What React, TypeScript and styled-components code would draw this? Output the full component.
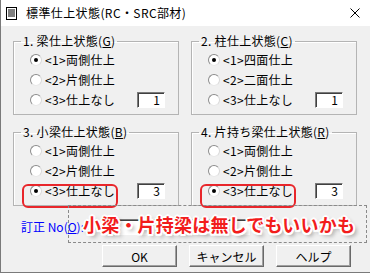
import React from 'react';
import styled, { createGlobalStyle } from 'styled-components';

const GlobalStyle = createGlobalStyle`
  body {
    margin: 0;
    background: #ffffff;
    font-family: "Noto Sans CJK JP", "Noto Sans", sans-serif;
  }
`;

const Window = styled.div`
  position: relative;
  width: 370px;
  height: 273px;
  box-sizing: border-box;
  border-left: 1px solid #7a7a7a;
  border-bottom: 1px solid #7a7a7a;
  background: #f0f0f0;
  font-size: 12px;
  color: #000;
`;

const TitleBar = styled.div`
  height: 26px;
  background: #ffffff;
  display: flex;
  align-items: center;
  padding: 0 10px 0 5px;
`;

const TitleText = styled.div`
  margin-left: 9px;
  font-size: 12px;
  line-height: 16px;
  letter-spacing: 0.4px;
  flex: 1;
`;

const Body = styled.div`
  padding: 7px 0 0 12px;
`;

const Groups = styled.div`
  display: grid;
  grid-template-columns: 166px 166px;
  column-gap: 12px;
  row-gap: 9px;
`;

const Group = styled.fieldset`
  margin: 0;
  min-width: 0;
  padding: 1px 13px 4px 16px;
  border: 1px solid #b4b4b4;
  box-shadow: inset 1px 1px 0 #ffffff;
`;

const Legend = styled.legend`
  margin-left: -9px;
  padding: 0 2px;
  font-size: 12px;
  line-height: 16px;
  height: 16px;
  letter-spacing: 0.3px;
`;

const Row = styled.div`
  position: relative;
  display: flex;
  align-items: center;
  height: 20px;
`;

const Radio = styled.span<{ checked?: boolean }>`
  position: relative;
  width: 12px;
  height: 12px;
  box-sizing: border-box;
  border-radius: 50%;
  border: 1px solid;
  border-color: #8c8c8c #d8d8d8 #e8e8e8 #8c8c8c;
  background: #ffffff;
  margin-right: 3px;
  flex: none;

  &::after {
    content: '';
    display: ${p => (p.checked ? 'block' : 'none')};
    position: absolute;
    left: 3px;
    top: 3px;
    width: 4px;
    height: 4px;
    border-radius: 50%;
    background: #000;
  }
`;

const RadioLabel = styled.span`
  line-height: 16px;
  white-space: nowrap;
  letter-spacing: 0.3px;
`;

const NumBox = styled.div<{ width?: number }>`
  margin-left: auto;
  width: ${p => p.width ?? 28}px;
  height: 16px;
  box-sizing: border-box;
  border: 1px solid;
  border-color: #7a7a7a #ffffff #ffffff #7a7a7a;
  box-shadow: inset 1px 1px 0 #404040;
  background: #ffffff;
  text-align: right;
  padding-right: 4px;
  line-height: 14px;
  font-size: 12px;
`;

const Highlight = styled.div`
  position: absolute;
  left: -8px;
  top: 3px;
  width: 96px;
  height: 24px;
  box-sizing: border-box;
  border: 2px solid #e8262b;
  border-radius: 6px;
`;

const CorrRow = styled.div`
  display: flex;
  align-items: center;
  height: 16px;
  margin-top: 13px;
  padding-left: 8px;
`;

const CorrLabel = styled.span`
  color: #0000ff;
  line-height: 16px;
  width: 81px;
`;

const Combo = styled(NumBox)`
  margin-left: 0;
`;

const ButtonRow = styled.div`
  display: flex;
  gap: 12px;
  margin-top: 10px;
  padding-left: 89px;
`;

const Button = styled.div`
  width: 75px;
  height: 22px;
  box-sizing: border-box;
  border: 1px solid;
  border-color: #ffffff #696969 #696969 #ffffff;
  box-shadow: inset -1px -1px 0 #a0a0a0;
  background: #f0f0f0;
  display: flex;
  align-items: center;
  justify-content: center;
  font-size: 12px;
`;

const Note = styled.div`
  position: absolute;
  left: 67px;
  top: 205px;
  width: 299px;
  height: 38px;
  box-sizing: border-box;
  border: 1px dashed #8a8a8a;
  display: flex;
  align-items: center;
  padding-left: 14px;
`;

const NoteText = styled.span`
  font-size: 18px;
  font-weight: 700;
  color: #f21c1c;
  letter-spacing: 0.2px;
  white-space: nowrap;
  text-shadow:
    -1.5px -1.5px 0 #fff, 1.5px -1.5px 0 #fff, -1.5px 1.5px 0 #fff, 1.5px 1.5px 0 #fff,
    0 -2px 0 #fff, 0 2px 0 #fff, -2px 0 0 #fff, 2px 0 0 #fff,
    3px 3px 4px rgba(0, 0, 0, 0.45);
`;

const U = styled.span`
  text-decoration: underline;
`;

const DocIcon = () => (
  <svg width="11" height="13" viewBox="0 0 11 13">
    <rect x="0.5" y="0.5" width="10" height="12" fill="#fff" stroke="#000" />
    <line x1="2" y1="3" x2="9" y2="3" stroke="#000" />
    <line x1="2" y1="5" x2="9" y2="5" stroke="#000" />
    <line x1="2" y1="7" x2="9" y2="7" stroke="#000" />
    <line x1="2" y1="9" x2="9" y2="9" stroke="#000" />
  </svg>
);

const CloseIcon = () => (
  <svg width="10" height="10" viewBox="0 0 10 10">
    <path d="M0.5 0.5 L9.5 9.5 M9.5 0.5 L0.5 9.5" stroke="#000" strokeWidth="1" />
  </svg>
);

type GroupDef = {
  title: string;
  key: string;
  options: string[];
  selected: number;
  value: string;
  mark?: boolean;
};

const groups: GroupDef[] = [
  { title: '1. 梁仕上状態(', key: 'G', options: ['<1>両側仕上', '<2>片側仕上', '<3>仕上なし'], selected: 0, value: '1' },
  { title: '2. 柱仕上状態(', key: 'C', options: ['<1>四面仕上', '<2>二面仕上', '<3>仕上なし'], selected: 0, value: '1' },
  { title: '3. 小梁仕上状態(', key: 'B', options: ['<1>両側仕上', '<2>片側仕上', '<3>仕上なし'], selected: 2, value: '3', mark: true },
  { title: '4. 片持ち梁仕上状態(', key: 'R', options: ['<1>両側仕上', '<2>片側仕上', '<3>仕上なし'], selected: 2, value: '3', mark: true },
];

const App = () => (
  <>
    <GlobalStyle />
    <Window>
      <TitleBar>
        <DocIcon />
        <TitleText>標準仕上状態(RC・SRC部材)</TitleText>
        <CloseIcon />
      </TitleBar>
      <Body>
        <Groups>
          {groups.map(g => (
            <Group key={g.title}>
              <Legend>
                {g.title}
                <U>{g.key}</U>)
              </Legend>
              {g.options.map((o, i) => (
                <Row key={o}>
                  <Radio checked={i === g.selected} />
                  <RadioLabel>{o}</RadioLabel>
                  {i === 2 && <NumBox>{g.value}</NumBox>}
                  {i === 2 && g.mark && <Highlight />}
                </Row>
              ))}
            </Group>
          ))}
        </Groups>
        <CorrRow>
          <CorrLabel>
            訂正 No(<U>O</U>):
          </CorrLabel>
          <Combo width={148} />
        </CorrRow>
        <ButtonRow>
          <Button>OK</Button>
          <Button>キャンセル</Button>
          <Button>ヘルプ</Button>
        </ButtonRow>
      </Body>
      <Note>
        <NoteText>小梁・片持梁は無しでもいいかも</NoteText>
      </Note>
    </Window>
  </>
);

export default App;
